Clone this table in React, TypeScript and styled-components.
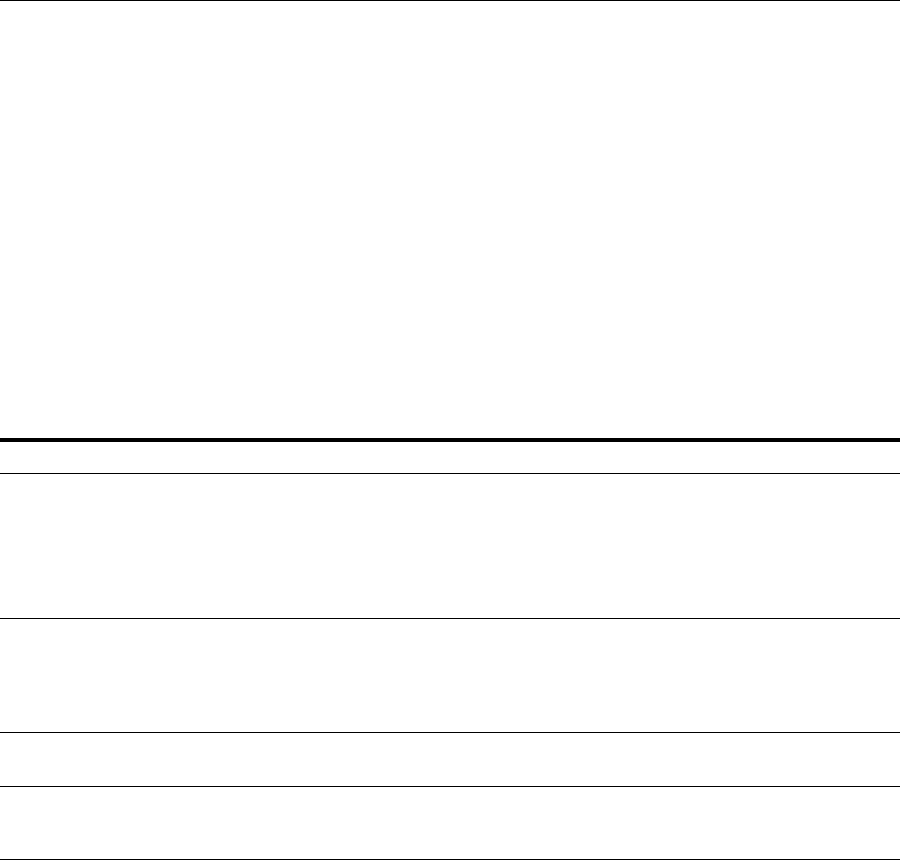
import React from "react";
import styled, { createGlobalStyle } from "styled-components";

const Global = createGlobalStyle`
  html, body { margin: 0; padding: 0; background: #ffffff; }
  body { font-family: "Liberation Sans", Arial, sans-serif; }
`;

const Table = styled.div`
  width: 900px;
  display: flex;
  flex-direction: column;
  border-top: 1px solid #000000;
`;

const Head = styled.div`
  height: 437px;
  border-bottom: 4px solid #000000;
`;

const Row = styled.div<{ $h: number }>`
  height: ${(p) => p.$h}px;
  border-bottom: 1px solid #000000;
`;

const rows = [31, 144, 113, 53, 72];

export default function App() {
  return (
    <>
      <Global />
      <Table>
        <Head />
        {rows.map((h, i) => (
          <Row key={i} $h={h} />
        ))}
      </Table>
    </>
  );
}
